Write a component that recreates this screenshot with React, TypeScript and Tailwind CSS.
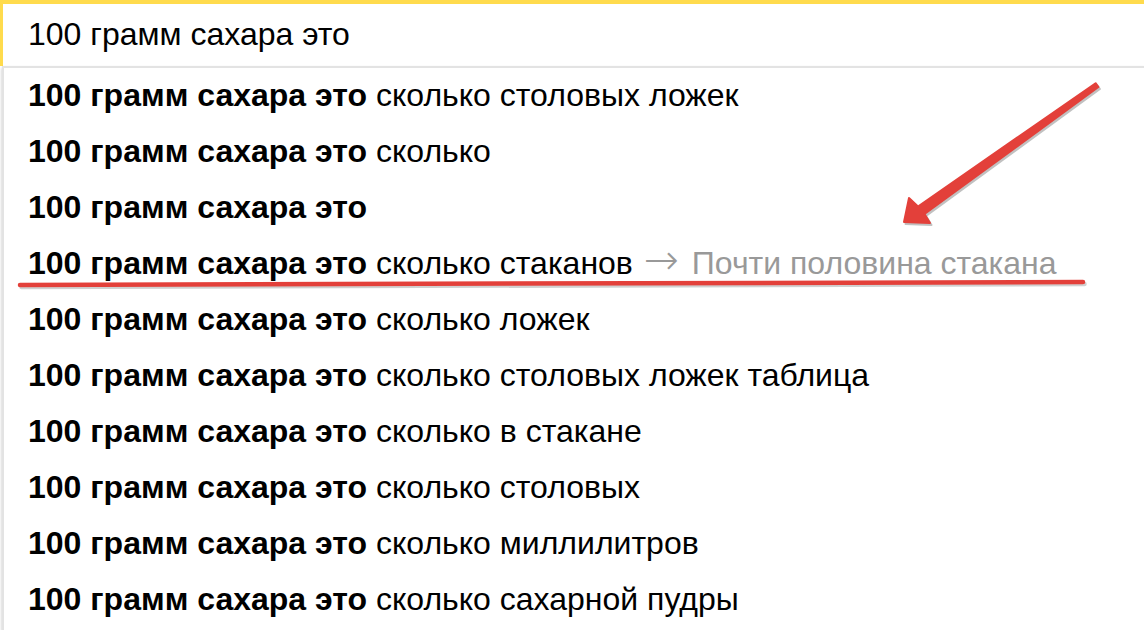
const BOLD = "100 грамм сахара это";

const rows: { rest: string; hint?: string }[] = [
  { rest: "сколько столовых ложек" },
  { rest: "сколько" },
  { rest: "" },
  { rest: "сколько стаканов", hint: "Почти половина стакана" },
  { rest: "сколько ложек" },
  { rest: "сколько столовых ложек таблица" },
  { rest: "сколько в стакане" },
  { rest: "сколько столовых" },
  { rest: "сколько миллилитров" },
  { rest: "сколько сахарной пудры" },
];

function Annotations() {
  // arrow from upper right towards the highlighted row + underline
  const arrow =
    "1095.6,83.2 918,206.5 909,198 904,222 930,223 924.5,214 1098.4,87";
  return (
    <svg
      className="pointer-events-none absolute inset-0"
      width={1144}
      height={630}
      viewBox="0 0 1144 630"
    >
      <g transform="translate(1.5 2)" opacity={0.45}>
        <polygon points={arrow} fill="#777" stroke="#777" strokeWidth={2} strokeLinejoin="round" />
        <path d="M20 285 L1083 282" stroke="#999" strokeWidth={4.5} strokeLinecap="round" />
      </g>
      <polygon points={arrow} fill="#e3403a" stroke="#e3403a" strokeWidth={2} strokeLinejoin="round" />
      <path d="M20 285 L1083 282" stroke="#e3403a" strokeWidth={4.5} strokeLinecap="round" />
    </svg>
  );
}

export default function App() {
  return (
    <div className="relative h-[630px] w-[1144px] overflow-hidden bg-white font-['Liberation_Sans',Arial,sans-serif] text-[32px] text-black">
      <div className="flex h-[66px] items-center border-l-[3px] border-t-[4px] border-[#ffdb4d] pl-[25px] pb-[2px]">
        100 грамм сахара это
      </div>
      <div className="ml-[2px] h-[564px] border-l-2 border-t-2 border-[#e3e3e3] shadow-[0_2px_3px_rgba(0,0,0,0.25)]">
        <div className="-mt-[1px]">
          {rows.map((r, i) => (
            <div key={i} className="flex h-[56px] items-center whitespace-pre pl-[24px]">
              <span className="font-bold">{BOLD}</span>
              {r.rest && <span> {r.rest}</span>}
              {r.hint && (
                <span className="text-[#999]">
                  {" "}
                  <span className="ml-[2px] mr-[4px] font-['DejaVu_Sans',sans-serif] text-[42px] font-extralight leading-[0]">→</span> {r.hint}
                </span>
              )}
            </div>
          ))}
        </div>
      </div>
      <Annotations />
    </div>
  );
}
